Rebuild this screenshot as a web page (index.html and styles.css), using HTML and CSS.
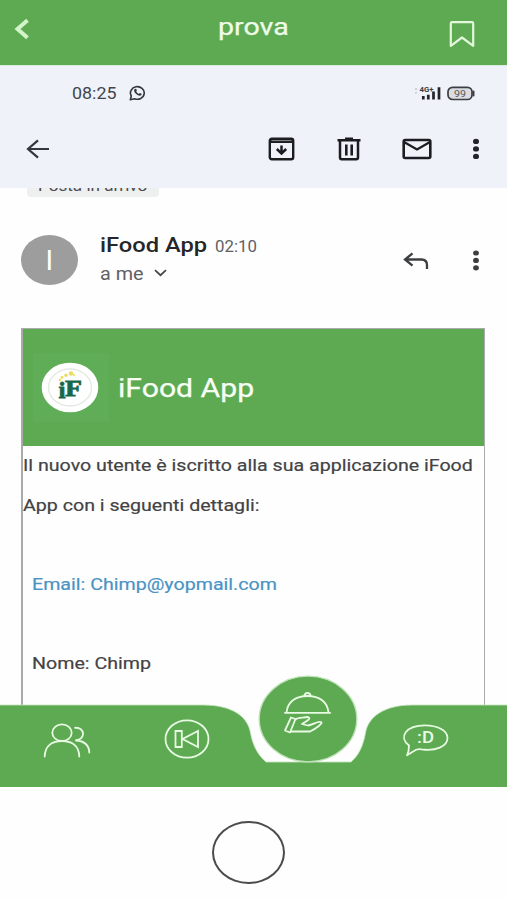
FILE: index.html
```html
<!DOCTYPE html>
<html lang="it">
<head>
<meta charset="utf-8">
<meta name="viewport" content="width=device-width">
<title>prova</title>
<link rel="stylesheet" href="styles.css">
</head>
<body>
<div class="screen">
  <header class="topbar">
    <svg class="back" width="16" height="22" viewBox="0 0 16 22"><path d="M13.500 2.200 3.500 11l10 8.800" fill="none" stroke="#d3f3ca" stroke-width="4"/></svg>
    <h1 class="title"><span class="wide">prova</span></h1>
    <svg class="bookmark" width="26" height="27" viewBox="0 0 26 27"><path d="M3 1.200h20q1.200 0 1.200 1.200v22.400L13 16.500 1.800 24.800V2.400Q1.800 1.200 3 1.200z" fill="none" stroke="#e2f8db" stroke-width="2.200" stroke-linejoin="round"/></svg>
  </header>

  <section class="mailbar">
    <div class="status">
      <span class="clock"><span class="wide">08:25</span></span>
      <svg class="whatsapp" width="18" height="16" viewBox="0 0 18 16"><path d="M1.300 14.700 2.300 11A6.900 6.300 0 1 1 5.500 13.700z" fill="none" stroke="#34373b" stroke-width="1.600" stroke-linejoin="round"/><path d="M5.500 4.300q1.500-1 2 .3l.4 1-.7 1q1 1.700 2.700 2.300l.9-.9 1.700.8q.7.500-.4 1.500-1.500 1-4-.6-2.900-1.900-3.100-3.900.1-.9.500-1.500z" fill="#34373b"/></svg>
      <svg class="signal" width="28" height="16" viewBox="0 0 28 16"><path d="M2 3v2M2 7v1.500" stroke="#bfc2c8" stroke-width="1.500"/><text x="5.500" y="7" class="net" textLength="14" lengthAdjust="spacingAndGlyphs">4G+</text><path d="M9.300 11v3.500M14.300 9.700v4.800M19.500 6.500v8M25 2.200v12.300" stroke="#222428" stroke-width="2.700"/></svg>
      <svg class="battery" width="28" height="15" viewBox="0 0 28 15"><rect x="1" y="1.300" width="24" height="12.200" rx="4.500" fill="#dcdde1" stroke="#3c3e42" stroke-width="1.700"/><path d="M26.500 5.500v4" stroke="#3c3e42" stroke-width="2" stroke-linecap="round"/><text x="7" y="10.700" class="level" textLength="12" lengthAdjust="spacingAndGlyphs">99</text></svg>
    </div>
    <div class="actions">
      <svg class="arrow" width="24" height="20" viewBox="0 0 24 20"><path d="M12 1.300 2 10l10 8.700M2 10h21" fill="none" stroke="#34373b" stroke-width="2.200"/></svg>
      <svg class="archive" width="27" height="24" viewBox="0 0 27 24"><rect x="1.800" y="1.800" width="23.400" height="20.400" rx="2" fill="none" stroke="#1b1d20" stroke-width="2.400"/><path d="M2 4.300h23" stroke="#1b1d20" stroke-width="3.400"/><path d="M3.500 3.600h20" stroke="#888b90" stroke-width="1"/><path d="M13.500 8.500v8M8.800 12l4.700 4.500 4.700-4.500" fill="none" stroke="#1b1d20" stroke-width="2.500"/></svg>
      <svg class="trash" width="24" height="24" viewBox="0 0 24 24"><path d="M3 4v16.500q0 1.700 1.700 1.700h14.600q1.700 0 1.700-1.700V4" fill="none" stroke="#1b1d20" stroke-width="2.500"/><path d="M.5 3.300h23M8 1.700h8M9.300 7.500v11M14.700 7.500v11" stroke="#1b1d20" stroke-width="2.600"/></svg>
      <svg class="mail" width="30" height="22" viewBox="0 0 30 22"><rect x="1.700" y="2" width="26.600" height="18" rx="1.500" fill="none" stroke="#1b1d20" stroke-width="2.600"/><path d="m2 4 13 7.500L28 4" fill="none" stroke="#1b1d20" stroke-width="2.300"/></svg>
      <svg class="more" width="8" height="22" viewBox="0 0 8 22"><g fill="#222428"><ellipse cx="4" cy="3.400" rx="3" ry="2.600"/><ellipse cx="4" cy="10.900" rx="3" ry="2.600"/><ellipse cx="4" cy="18.400" rx="3" ry="2.600"/></g></svg>
    </div>
  </section>

  <main class="message">
    <div class="label"><span class="wide">Posta in arrivo</span></div>
    <div class="sender">
      <div class="avatar"><span>I</span></div>
      <div class="who">
        <div class="line"><b class="name"><span class="wide">iFood App</span></b><span class="hour"><span class="wide">02:10</span></span></div>
        <div class="line"><span class="to"><span class="wide">a me</span></span><svg class="chevron" width="13" height="8" viewBox="0 0 13 8"><path d="m1 1.200 5.500 5 5.500-5" fill="none" stroke="#45474a" stroke-width="1.800"/></svg></div>
      </div>
      <svg class="reply" width="26" height="18" viewBox="0 0 26 18"><path d="M9.500 1.300 2 7.500l7.500 6.200M2 7.500h16.500q5.500.3 5.500 5.500v4" fill="none" stroke="#3d3e40" stroke-width="2.300"/></svg>
      <svg class="more" width="8" height="22" viewBox="0 0 8 22"><g fill="#3d3e40"><ellipse cx="4" cy="3" rx="2.900" ry="2.600"/><ellipse cx="4" cy="10.400" rx="2.900" ry="2.600"/><ellipse cx="4" cy="17.800" rx="2.900" ry="2.600"/></g></svg>
    </div>

    <article class="card">
      <div class="brand">
        <div class="tile">
          <svg width="58" height="51" viewBox="0 0 58 51"><ellipse cx="29" cy="25.500" rx="28.300" ry="24.800" fill="#fff"/><ellipse cx="29" cy="25.500" rx="21.500" ry="18.500" fill="none" stroke="#e4e8e2" stroke-width="1.300"/><text x="17.500" y="36" class="logo" textLength="7" lengthAdjust="spacingAndGlyphs">i</text><text x="24" y="34" class="logo" textLength="17" lengthAdjust="spacingAndGlyphs">F</text><g fill="#eadb62"><circle cx="30" cy="11.500" r="2.300"/><circle cx="25" cy="13.300" r="1.700"/><circle cx="21" cy="15.300" r="1.500"/><circle cx="19" cy="18" r="1.200"/><circle cx="33" cy="13" r="1"/></g></svg>
        </div>
        <h2 class="brandname"><span class="wide">iFood App</span></h2>
      </div>
      <div class="body">
        <p class="p1"><span class="wide">Il nuovo utente è iscritto alla sua applicazione iFood</span></p>
        <p class="p2"><span class="wide">App con i seguenti dettagli:</span></p>
        <p class="email"><span class="wide">Email: Chimp@yopmail.com</span></p>
        <p class="person"><span class="wide">Nome: Chimp</span></p>
      </div>
    </article>
  </main>

  <nav class="nav">
    <svg class="shape" width="507" height="112" viewBox="0 0 507 112"><path d="M-3 30H203C233 30 248 42 250.500 58 253 72 259 81 266 87H351C358 81 363 72 365.500 58 368 42 384 30 412 30H510V115H-3z" fill="#5eaa52" stroke="#c5e4be" stroke-width=".8"/><ellipse cx="308" cy="44" rx="48.800" ry="42.800" fill="#5eaa52" stroke="#bfe3b8" stroke-width="1.300"/></svg>
    <svg class="people" width="48" height="35" viewBox="0 0 48 35"><g fill="none" stroke="#e8fae3" stroke-width="1.800" stroke-linecap="round"><ellipse cx="19" cy="9.700" rx="9.700" ry="8.300"/><path d="M1.700 33.500C2 22 10 18 19 18s17 4 17.300 15.500M32 4.800c10-.8 11 11.700 1 12.300M33 17.500c8 .5 13 4.500 13.300 12"/></g></svg>
    <svg class="rewind" width="46" height="40" viewBox="0 0 46 40"><g fill="none" stroke="#e8fae3" stroke-width="1.800"><ellipse cx="23" cy="20" rx="21.500" ry="18.700"/><path d="M11.500 12h6.300v16h-6.300zM34 12v16L18.500 20z"/></g></svg>
    <svg class="dish" width="49" height="43" viewBox="0 0 49 43"><g fill="none" stroke="#e8fae3" stroke-width="1.800" stroke-linejoin="round"><path d="M1.300 21.800h46.500M3.500 21.500C4.500 11 12.500 5 24.500 5S44.500 11 45.500 21.500M21.500 5c-.5-4 6.500-4 6 0M8 26.500l-6 13 5 2 5.500-13.500zM12.500 28.500C15 26 19 27 25 26c3 1 1 3-6 7l6 1.500c6-1 9-4.500 13-3.500 3 1-6 7-11 9.500H8"/></g></svg>
    <svg class="chat" width="48" height="33" viewBox="0 0 48 33"><path d="M8 21.500C-3 13 5 1.300 24 1.300c12 0 22.500 5 22.500 12.500 0 9-12 13.500-26 11.500-4-.8-6 0-8 2l-6.500 4q2-4 2-9.800z" fill="none" stroke="#e8fae3" stroke-width="1.800" stroke-linejoin="round"/><text x="16" y="19.300" class="smile" textLength="17" lengthAdjust="spacingAndGlyphs">:D</text></svg>
  </nav>
  <footer class="home"><div class="homebtn"></div></footer>
</div>
</body>
</html>
```
FILE: styles.css
```css
* { box-sizing: border-box; }
body { margin: 0; background: #fff; font-family: Roboto, "Liberation Sans", sans-serif; color: #3c3c3e; }
.screen { width: 507px; height: 900px; display: flex; flex-direction: column; overflow: hidden; background: #fefefe; }
svg { display: block; flex: none; }
h1, h2, p { margin: 0; font-weight: 400; }
.wide { display: inline-block; white-space: nowrap; transform-origin: 0 50%; }

.topbar { height: 66px; background: #5eaa52; display: grid; grid-template-columns: 218px 1fr 58px; border-bottom: 1px solid #dcebe0; flex: none; }
.back { margin: 18px 0 0 14px; }
.title { padding-top: 12px; font-size: 24px; line-height: 30px; color: #effbea; -webkit-text-stroke: .25px; }
.title .wide { transform: scaleX(1.19); }
.bookmark { margin-top: 21px; }

.mailbar { height: 122px; background: #eff2f9; flex: none; }
.status { height: 54px; padding: 0 32px 0 72px; display: flex; align-items: center; }
.clock { width: 57px; font-size: 17px; line-height: 20px; color: #424549; }
.clock .wide { transform: scaleX(1.05); }
.signal { margin-left: auto; margin-right: 5px; }
.net { font: 700 8px Roboto, sans-serif; fill: #3a3c40; }
.level { font: 8.500px Roboto, sans-serif; fill: #555; }
.actions { height: 58px; display: flex; align-items: center; padding: 0 27px 0 26px; }
.arrow { margin-right: 217.500px; }
.archive { margin-right: 42px; }
.trash { margin-right: 41px; }
.mail { margin-right: 40px; }

.message { height: 517px; overflow: hidden; flex: none; }
.label { width: 132px; height: 20px; margin: -11px 0 0 27px; padding-left: 11px; border-radius: 4px; background: #eeefef; font-size: 15px; line-height: 19px; color: #4c4d4f; clip-path: inset(11px 0 0 0); }
.label .wide { transform: scaleX(1.14); }
.sender { height: 131px; padding: 34px 27px 0 21px; display: flex; align-items: flex-start; }
.avatar { width: 57px; height: 50px; margin-top: 4px; border-radius: 50%; background: #9d9d9d; color: #fff; display: flex; align-items: center; justify-content: center; font-size: 28px; }
.who { width: 303px; padding-left: 22px; }
.line { display: flex; align-items: center; height: 28px; }
.name { width: 115px; font-size: 20px; font-weight: 500; color: #262628; }
.name .wide { transform: scaleX(1.185); }
.hour { font-size: 16px; color: #606164; padding-top: 2px; }
.hour .wide { transform: scaleX(1.05); }
.to { width: 54px; font-size: 18px; color: #606164; padding-top: 1px; }
.to .wide { transform: scaleX(1.1); }
.reply { margin: 21px 43px 0 23px; }
.sender > .more { margin-top: 19px; }

.card { margin: 0 22px 0 21px; height: 460px; border: 2px solid #aaa; border-width: 1px 1px 0 2px; }
.brand { height: 117px; background: #5eaa52; display: flex; align-items: center; padding-left: 10px; }
.tile { width: 76px; height: 69px; background: #60ad57; display: flex; align-items: center; padding-left: 8px; }
.logo { font: 700 24px "Liberation Serif", serif; fill: #17684b; stroke: #17684b; stroke-width: .8; }
.brandname { margin-left: 8.500px; font-size: 26px; line-height: 30px; color: #f7fff5; -webkit-text-stroke: .25px; }
.brandname .wide { transform: scaleX(1.16); }
.body { font-size: 17px; color: #434345; -webkit-text-stroke: .2px; }
.body p { height: 39.500px; line-height: 39.500px; }
.body .email { margin: 39.500px 0 39.500px 9px; color: #4a93c4; }
.body .person { margin-left: 9px; }
.body .wide { transform: scaleX(1.154); }

.nav { position: relative; height: 82px; display: flex; flex: none; }
.shape { position: absolute; left: 0; top: -30px; }
.nav > svg:not(.shape) { position: relative; }
.people { margin: 18px 0 0 43px; }
.rewind { margin: 14px 0 0 73px; }
.dish { margin: -14px 0 0 73px; }
.chat { margin: 19px 0 0 69px; }
.smile { font: 500 16px Roboto, sans-serif; fill: #e8fae3; }
.home { height: 113px; display: flex; justify-content: center; padding: 34px 10px 0 0; }
.homebtn { width: 73px; height: 63px; border: 2px solid #4b4b4d; border-radius: 50%; }
```
